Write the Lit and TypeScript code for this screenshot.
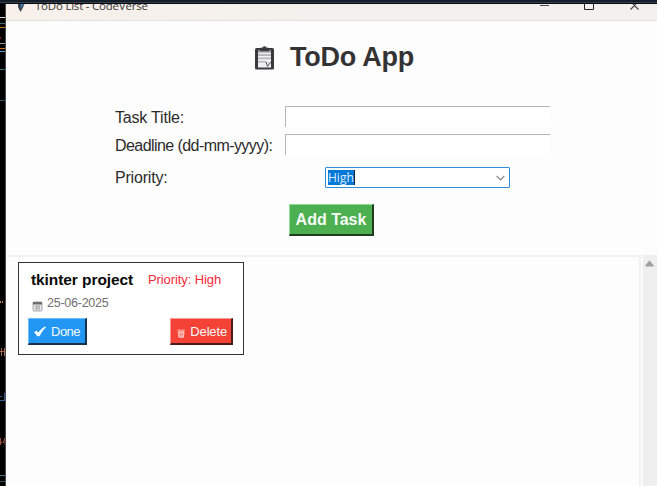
import { LitElement, html, css, svg } from "lit";
import { customElement, property } from "lit/decorators.js";

interface Task {
  title: string;
  priority: string;
  deadline: string;
}

// Slivers of the code editor visible behind the window: [y, height, colour]
const editorLines: [number, number, string][] = [
  [17, 1, "#d8d8d8"],
  [23, 1, "#3f7183"],
  [27, 1, "#c9731c"],
  [43, 1, "#96969c"],
  [48, 1, "#c9731c"],
  [51, 1, "#5b9fb8"],
  [69, 1, "#3f7183"],
  [100, 1, "#2f5663"],
  [475, 1, "#47788a"],
  [481, 1, "#31525f"],
];

@customElement("task-card")
export class TaskCard extends LitElement {
  @property({ attribute: false }) task!: Task;

  static styles = css`
    :host {
      display: flex;
      flex-direction: column;
      box-sizing: border-box;
      width: 226px;
      height: 93px;
      padding: 7px 10px 9px 9px;
      border: 1px solid #333;
      background: #fff;
      white-space: nowrap;
    }
    .head {
      display: flex;
      align-items: center;
      height: 19px;
      padding-left: 3px;
    }
    .title {
      width: 117px;
      font-size: 15.5px;
      letter-spacing: -0.08px;
      font-weight: bold;
      color: #0a0a0a;
    }
    .priority {
      font-size: 13px;
      color: #fb2a38;
      letter-spacing: -0.1px;
    }
    .date {
      display: flex;
      align-items: center;
      height: 18px;
      margin-top: 5px;
      padding-left: 4px;
      font-size: 12.5px;
      letter-spacing: -0.25px;
      color: #707070;
    }
    .date svg {
      margin: 6px 4px 0 0;
    }
    .actions {
      display: flex;
      justify-content: space-between;
      margin-top: 6px;
    }
    button {
      display: flex;
      align-items: center;
      box-sizing: border-box;
      height: 27px;
      padding: 0 4px 0 5px;
      border: 1px solid;
      border-right-width: 2px;
      border-bottom-width: 2px;
      font: 13px "Liberation Sans", Arial, sans-serif;
      color: #f4f8fc;
    }
    .done {
      width: 59px;
      background: #2196f3;
      border-color: #6fbcf8 #17324a #17324a #6fbcf8;
      letter-spacing: -0.5px;
    }
    .done svg {
      margin-right: 5px;
    }
    .delete {
      width: 63px;
      background: #f44336;
      border-color: #fb9a93 #4a1d1a #4a1d1a #fb9a93;
      padding-left: 6px;
      letter-spacing: -0.15px;
    }
    .delete svg {
      margin: 5px 5px 0 0;
    }
  `;

  render() {
    return html`
      <div class="head">
        <span class="title">${this.task.title}</span>
        <span class="priority">Priority: ${this.task.priority}</span>
      </div>
      <div class="date">
        <svg width="11" height="11" viewBox="0 0 11 11">
          <rect x="1" y="1" width="9" height="9" rx="1" fill="#e4e4e4" stroke="#aaa" />
          <path d="M1 1h9v2.5h-9z" fill="#6e6e6e" />
          <path d="M3 5.5h5M3 7.5h5M4.5 4v5M7 4v5" stroke="#a3a3a3" stroke-width=".8" />
        </svg>
        <span>${this.task.deadline}</span>
      </div>
      <div class="actions">
        <button class="done">
          <svg width="12" height="11" viewBox="0 0 12 11">
            <path d="M.4 6.2 2.5 5l1.9 2C6 4.500 8.500 2 11.200.8L11.500 1.500C9 3.800 6.900 6.800 5.400 10H3.500Z" fill="#fff" stroke="#fff" stroke-width=".6" stroke-linejoin="round" />
          </svg>
          <span>Done</span>
        </button>
        <button class="delete">
          <svg width="10" height="11" viewBox="0 0 10 11">
            <path d="M.5 1.500h9M1.500 3.500h7l-.8 6.500H2.300z" fill="#fbb8b2" stroke="#ffd6d2" />
            <path d="M4 4.500v5M6 4.500v5M2 6.500h6" stroke="#f66a60" stroke-width=".6" />
          </svg>
          <span>Delete</span>
        </button>
      </div>
    `;
  }
}

@customElement("app-root")
export class AppRoot extends LitElement {
  private tasks: Task[] = [
    { title: "tkinter project", priority: "High", deadline: "25-06-2025" },
  ];

  static styles = css`
    :host {
      display: grid;
      grid-template: 4px 1fr / 6px 1fr;
      width: 657px;
      height: 486px;
      overflow: hidden;
      background: #000;
      font-family: "Liberation Sans", Arial, sans-serif;
      white-space: nowrap;
    }
    .desk-top {
      grid-column: 1 / 3;
      box-sizing: border-box;
      background: #151d29;
      border-bottom: 1px solid #05080c;
      box-shadow: inset 0 -1px #34404d;
    }
    .editor {
      display: block;
      box-sizing: border-box;
    }
    .window {
      display: grid;
      grid-template-rows: 17px 234px 1fr;
      min-height: 0;
      background: #fdfdfd;
      box-shadow: -1px 0 #4b4b4b;
    }
    .titlebar {
      display: flex;
      box-sizing: border-box;
      overflow: hidden;
      background: linear-gradient(90deg, #f8f0eb, #f3f1ed 50%);
      border-bottom: 1px solid #e4e2df;
    }
    .feather {
      flex: none;
      margin-left: 10px;
    }
    .caption {
      flex: 1;
      margin: -6px 0 0 9px;
      font: 11.5px/15px "Open Sans", sans-serif;
      letter-spacing: -0.22px;
      color: #3a3836;
    }
    .controls {
      flex: none;
      width: 117px;
    }
    .form {
      display: flex;
      flex-direction: column;
    }
    .heading {
      display: flex;
      align-items: center;
      height: 36px;
      margin: 19px 0 0 248px;
      font-size: 27px;
      letter-spacing: -0.25px;
      font-weight: bold;
      color: #333;
    }
    .heading span {
      padding-bottom: 2px;
    }
    .heading svg {
      margin-right: 15px;
    }
    .fields {
      display: grid;
      grid-template-columns: 170px 265px;
      grid-template-rows: 28px 28px 27px;
      margin: 30px 0 0 109px;
      font-size: 16px;
      letter-spacing: -0.2px;
      color: #2b2b2b;
    }
    .fields label {
      line-height: 24px;
    }
    .fields .tight {
      letter-spacing: -0.57px;
    }
    .entry {
      box-sizing: border-box;
      height: 21px;
      border: solid #b5b5b5;
      border-width: 1px 0 0 1px;
      background: #fff;
    }
    .fields .last {
      line-height: 32px;
    }
    .combo {
      display: flex;
      justify-content: space-between;
      align-items: center;
      box-sizing: border-box;
      width: 185px;
      height: 21px;
      margin: 5px 0 0 40px;
      padding: 0 4px 0 2px;
      border: 1px solid #2f8fdd;
      border-radius: 1px;
      background: #fff;
    }
    .selected {
      width: 26px;
      height: 15px;
      background: #0078d7;
      color: #e0effb;
      font: 12px/15px "Open Sans", sans-serif;
      letter-spacing: 0;
      border-right: 1px solid #13283a;
    }
    .add {
      box-sizing: border-box;
      width: 85px;
      height: 32px;
      margin: 15px 0 0 283px;
      padding: 0;
      border: 1px solid;
      border-color: #8fdc92 #203c21 #203c21 #8fdc92;
      border-right-width: 2px;
      border-bottom-width: 2px;
      background: #4caf50;
      color: #f8fcf8;
      font: bold 16px "Liberation Sans", Arial, sans-serif;
    }
    .list {
      display: grid;
      grid-template-columns: 1fr 16px;
      min-height: 0;
    }
    .canvas {
      border-top: 2px solid #f1f1f1;
      border-right: 2px solid #f1f1f1;
      padding: 5px 0 0 12px;
    }
    .scroll {
      background: #efefef;
      border-left: 1px solid #f9f9f9;
      margin-left: 1px;
      padding: 5px 0 0 2px;
    }
    .scroll svg {
      display: block;
    }
  `;

  render() {
    return html`
      <div class="desk-top"></div>
      <svg class="editor" width="6" height="482" viewBox="0 4 6 482">
        ${editorLines.map(
          ([y, h, c]) => svg`<rect x="0" y=${y} width="6" height=${h} fill=${c} />`,
        )}
        <path d="M0 38h1" stroke="#7c1d1d" stroke-width="2" />
        <path d="M5.500 37v8" stroke="#2d2a91" />
        <path d="M.5 301v2M2.500 301v2" stroke="#c48362" />
        <path d="M0 351.500h6M1.500 348v8M4.500 348v8M4.500 348.500h1.500" stroke="#a4684a" />
        <path d="M0 396.500h2M0 400.500h4M4.500 393v8" stroke="#355e96" />
        <path d="M0 442.500h2M.5 438v7M3 443l2-5v7" stroke="#a44f3c" fill="none" />
      </svg>
      <main class="window">
        <header class="titlebar">
          <svg class="feather" width="10" height="9" viewBox="0 0 10 9">
            <path d="M2 0h6.500L7 3.500 4.500 8 3.500 6 2 3z" fill="#3c4650" />
            <path d="M4.500 0h3L5 4z" fill="#3987c8" />
          </svg>
          <span class="caption">ToDo List - CodeVerse</span>
          <svg class="controls" width="117" height="16" viewBox="540 4 117 16">
            <g fill="none" stroke="#454545">
              <path d="M540 5.500h9" />
              <path d="M584.500 4v5.500h9V4" stroke="#222" />
              <path d="m630.500 9.500 4-4 4 4M633 4l1.500 1.500L636 4" stroke-width="1.200" />
            </g>
          </svg>
        </header>
        <section class="form">
          <div class="heading">
            <svg width="21" height="24" viewBox="0 0 21 24">
              <rect x="1" y="2" width="19" height="21.500" rx="1.500" fill="#3a3a3c" />
              <path d="M4 4.500h13v17H4z" fill="#f1f1f3" />
              <path d="M4 8h13v2H4zM4 11.500h13v1.800H4zM4 15h8v1.500H4z" fill="#b8b8bb" />
              <path d="M4 5h13v1.500H4z" fill="#8c8c90" />
              <path d="M7 1.500h2L9.500.3h2l.5 1.200h2L15 5H6z" fill="#3a3a3c" />
              <path d="m12 16 1.500 4.500L17 16" fill="#ddd" stroke="#55555a" />
            </svg>
            <span>ToDo App</span>
          </div>
          <div class="fields">
            <label>Task Title:</label>
            <div class="entry"></div>
            <label class="tight">Deadline (dd-mm-yyyy):</label>
            <div class="entry"></div>
            <label class="last">Priority:</label>
            <div class="combo">
              <span class="selected">High</span>
              <svg width="9" height="6" viewBox="0 0 9 6">
                <path d="m.7 1 3.800 3.800L8.300 1" fill="none" stroke="#8a8a8a" stroke-width="1.200" />
              </svg>
            </div>
          </div>
          <button class="add">Add Task</button>
        </section>
        <section class="list">
          <div class="canvas">
            ${this.tasks.map((t) => html`<task-card .task=${t}></task-card>`)}
          </div>
          <div class="scroll">
            <svg width="9" height="7" viewBox="0 0 9 7">
              <path d="M4.500.3 8.500 5.200V6.500H.5V5.200z" fill="#a0a0a0" />
            </svg>
          </div>
        </section>
      </main>
    `;
  }
}
